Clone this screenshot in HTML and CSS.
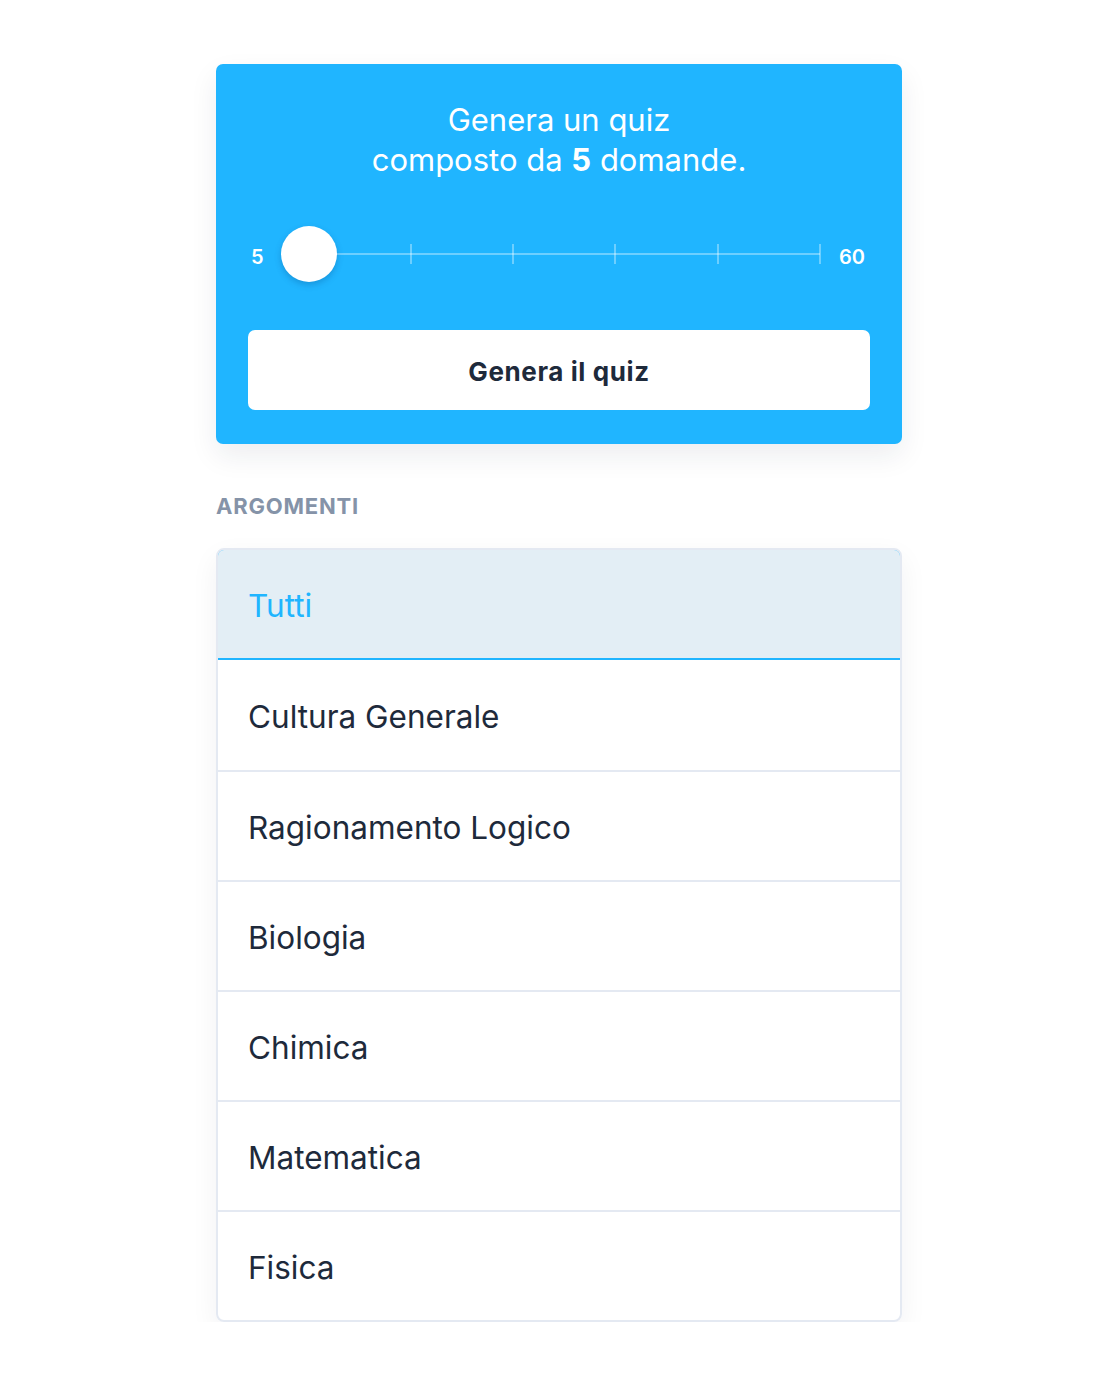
FILE: index.html
```html
<!DOCTYPE html>
<html lang="it">
<head>
    <meta charset="UTF-8">
    <meta name="viewport" content="width=device-width, initial-scale=1.0">
    <title>Genera un quiz</title>
    <link rel="stylesheet" href="styles.css">
</head>
<body>
    <div class="container">
        <div class="quiz-card">
            <h1 class="quiz-title">Genera un quiz<br>composto da <b>5</b> domande.</h1>
            <div class="slider">
                <span class="slider-label">5</span>
                <div class="slider-track">
                    <span class="tick" style="left: 20%"></span>
                    <span class="tick" style="left: 40%"></span>
                    <span class="tick" style="left: 60%"></span>
                    <span class="tick" style="left: 80%"></span>
                    <span class="tick" style="left: 100%"></span>
                    <span class="thumb"></span>
                </div>
                <span class="slider-label">60</span>
            </div>
            <button class="generate-btn">Genera il quiz</button>
        </div>

        <h2 class="section-title">Argomenti</h2>
        <ul class="topic-list">
            <li class="topic active">Tutti</li>
            <li class="topic">Cultura Generale</li>
            <li class="topic">Ragionamento Logico</li>
            <li class="topic">Biologia</li>
            <li class="topic">Chimica</li>
            <li class="topic">Matematica</li>
            <li class="topic">Fisica</li>
        </ul>
    </div>
</body>
</html>
```

FILE: styles.css
```css
body {
    font-family: Inter, "Open Sans", sans-serif;
    background-color: #ffffff;
    margin: 0;
    padding: 0;
    color: #1e2a3b;
}
.container {
    width: 686px;
    margin-left: calc(50% - 344px);
    padding-top: 64px;
}
.quiz-card {
    background-color: #20b5ff;
    border-radius: 7px;
    padding: 36px 32px 34px;
    box-shadow: 0 12px 28px rgba(30, 42, 59, 0.08);
}
.quiz-title {
    margin: 0;
    color: #ffffff;
    font-size: 31px;
    font-weight: 400;
    line-height: 40px;
    text-align: center;
}
.quiz-title b {
    font-weight: 700;
}
.slider {
    display: flex;
    align-items: center;
    gap: 19px;
    margin-top: 46px;
    padding: 0 5px 0 3px;
    height: 56px;
}
.slider-label {
    color: #ffffff;
    font-size: 20px;
    font-weight: 600;
    padding-top: 5px;
}
.slider-track {
    position: relative;
    flex: 1;
    height: 2px;
    background-color: rgba(255, 255, 255, 0.35);
    margin-left: 26px;
}
.tick {
    position: absolute;
    top: -9px;
    width: 2px;
    height: 20px;
    margin-left: -1px;
    background-color: rgba(255, 255, 255, 0.35);
}
.thumb {
    position: absolute;
    left: -28px;
    top: -27px;
    width: 56px;
    height: 56px;
    border-radius: 50%;
    background-color: #ffffff;
    box-shadow: 0 3px 6px rgba(0, 60, 120, 0.25);
}
.generate-btn {
    display: block;
    width: 100%;
    height: 80px;
    margin-top: 48px;
    padding-top: 4px;
    border: none;
    border-radius: 7px;
    background-color: #ffffff;
    color: #1e2a3b;
    font-family: inherit;
    font-size: 26px;
    font-weight: 700;
    letter-spacing: 0.6px;
    cursor: pointer;
}
.section-title {
    margin: 48px 0 0;
    color: #8593a8;
    font-size: 22px;
    font-weight: 700;
    letter-spacing: 0.8px;
    text-transform: uppercase;
    line-height: 28px;
}
.topic-list {
    list-style: none;
    margin: 28px 0 0;
    padding: 0;
    border: 2px solid #e4e9f2;
    border-radius: 8px;
    box-shadow: 0 10px 28px rgba(30, 42, 59, 0.06);
    overflow: hidden;
}
.topic {
    box-sizing: border-box;
    display: flex;
    align-items: center;
    height: 110px;
    padding: 3px 0 0 30px;
    font-size: 31.5px;
    border-top: 2px solid #e4e9f2;
}
.topic:first-child {
    border-top: none;
}
.topic.active {
    height: 112px;
    margin: -2px -2px 0;
    background-color: #e3eef5;
    color: #20b5ff;
    border: 2px solid #20b5ff;
    border-radius: 8px 8px 0 0;
}
.topic.active + .topic {
    border-top: none;
}
```
